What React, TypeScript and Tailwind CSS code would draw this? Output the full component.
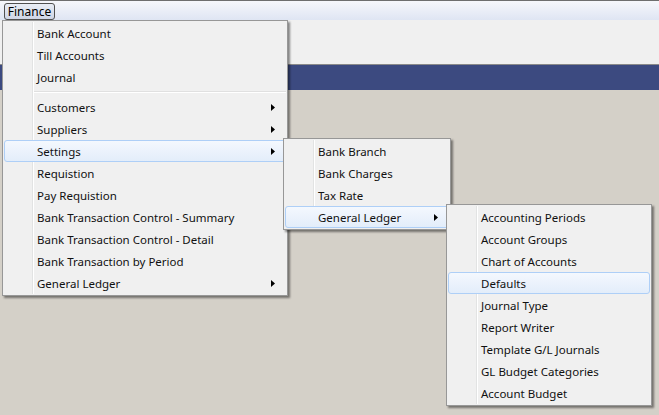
import React from 'react';

type Item = { label: string; sub?: boolean; active?: boolean } | 'sep';

const mainItems: Item[] = [
  { label: 'Bank Account' },
  { label: 'Till Accounts' },
  { label: 'Journal' },
  'sep',
  { label: 'Customers', sub: true },
  { label: 'Suppliers', sub: true },
  { label: 'Settings', sub: true, active: true },
  { label: 'Requistion' },
  { label: 'Pay Requistion' },
  { label: 'Bank Transaction Control - Summary' },
  { label: 'Bank Transaction Control - Detail' },
  { label: 'Bank Transaction by Period' },
  { label: 'General Ledger', sub: true },
];

const settingsItems: Item[] = [
  { label: 'Bank Branch' },
  { label: 'Bank Charges' },
  { label: 'Tax Rate' },
  { label: 'General Ledger', sub: true, active: true },
];

const ledgerItems: Item[] = [
  { label: 'Accounting Periods' },
  { label: 'Account Groups' },
  { label: 'Chart of Accounts' },
  { label: 'Defaults', active: true },
  { label: 'Journal Type' },
  { label: 'Report Writer' },
  { label: 'Template G/L Journals' },
  { label: 'GL Budget Categories' },
  { label: 'Account Budget' },
];

function Arrow() {
  return (
    <svg width="4" height="7" viewBox="0 0 4 7" className="absolute right-[10px] top-[7px]">
      <path d="M0 0 L4 3.5 L0 7 Z" fill="#000" />
    </svg>
  );
}

function Menu({ items, className }: { items: Item[]; className: string }) {
  return (
    <div
      className={`absolute border border-[#979797] bg-[#f0f0f0] p-[1px] shadow-[2px_2px_2px_rgba(0,0,0,0.45)] ${className}`}
    >
      {/* icon gutter */}
      <div className="pointer-events-none absolute top-[1px] bottom-[1px] left-[29px] w-[1px] bg-[#e2e3e3]" />
      <div className="pointer-events-none absolute top-[1px] bottom-[1px] left-[30px] w-[1px] bg-white" />
      <div className="relative flex flex-col">
        {items.map((it, i) =>
          it === 'sep' ? (
            <div key={i} className="flex h-[8px] items-center pl-[30px]">
              <div className="flex w-full flex-col">
                <div className="h-[1px] bg-[#e0e0e0]" />
                <div className="h-[1px] bg-white" />
              </div>
            </div>
          ) : (
            <div
              key={i}
              className={`relative flex h-[22px] items-center rounded-[3px] pl-[32px] text-[11.5px] text-[#111] ${
                it.active
                  ? 'border border-[#aecff7] bg-gradient-to-b from-[#f4f8fe] to-[#e3edfa]'
                  : 'border border-transparent'
              }`}
            >
              <span className="mt-[1px] whitespace-nowrap leading-none">{it.label}</span>
              {it.sub && <Arrow />}
            </div>
          )
        )}
      </div>
    </div>
  );
}

export default function App() {
  return (
    <div
      className="relative h-[415px] w-[659px] overflow-hidden bg-[#d4d0c8]"
      style={{ fontFamily: '"Noto Sans", "Open Sans", sans-serif' }}
    >
      {/* menu bar */}
      <div className="flex h-[20px] items-start border-t border-[#6e6e6e] bg-gradient-to-b from-[#f6f7fb] to-[#dfe5f3] pl-[4px] pt-[2px]">
        <div className="flex h-[17px] w-[51px] items-center justify-center rounded-[3px] border border-[#505050] bg-gradient-to-b from-[#e9edf5] to-[#cfd6e6] text-[12px] leading-none text-black">
          Finance
        </div>
      </div>
      {/* toolbar area */}
      <div className="h-[45px] border-b border-[#8a8a8a] bg-[#f0f0f0]" />
      {/* title strip */}
      <div className="h-[25px] bg-[#3c4a80]" />

      <Menu items={mainItems} className="left-[2px] top-[20px] w-[286px]" />
      <Menu items={settingsItems} className="left-[283px] top-[138px] w-[168px]" />
      <Menu items={ledgerItems} className="left-[446px] top-[204px] w-[206px]" />
    </div>
  );
}
